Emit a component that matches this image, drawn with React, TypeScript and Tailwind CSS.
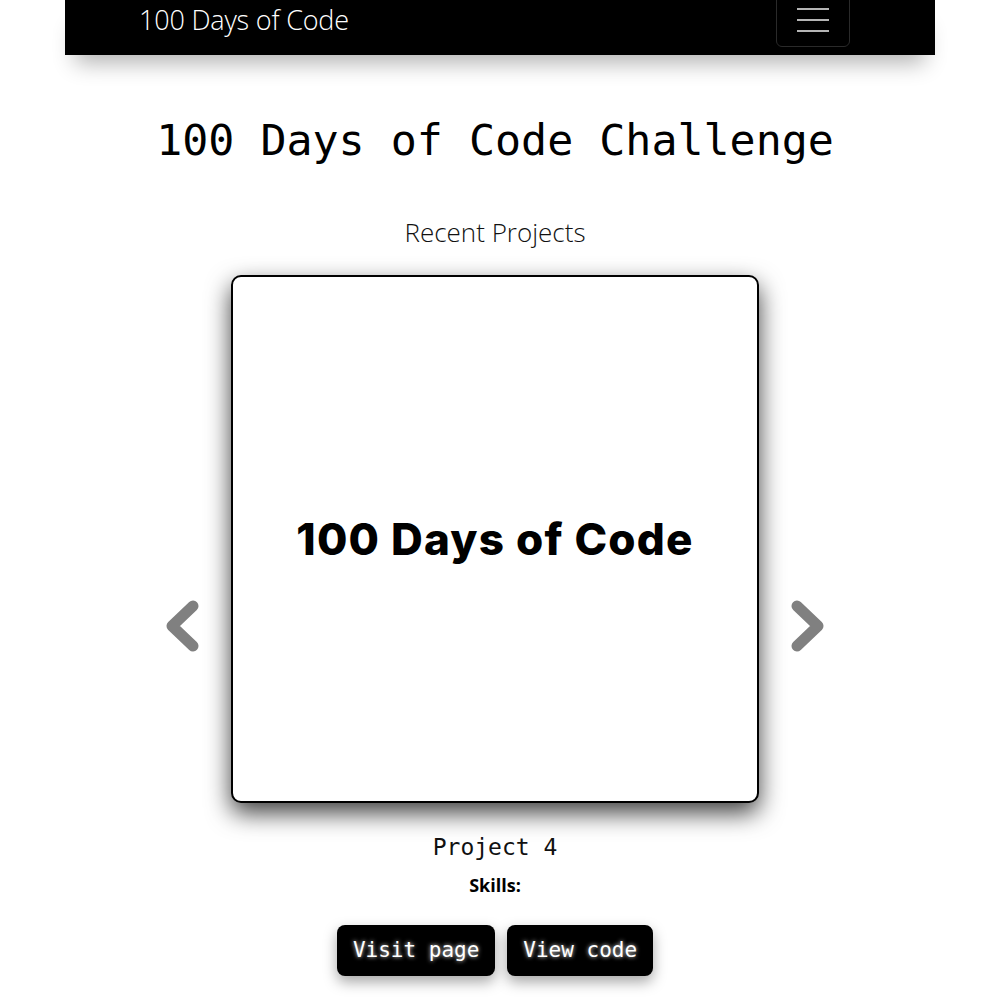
import React from "react";

const mono = { fontFamily: '"DejaVu Sans Mono", "Liberation Mono", monospace' };

const Chevron: React.FC<{ dir: "left" | "right" }> = ({ dir }) => (
  <svg width="36" height="54" viewBox="0 0 36 54" aria-hidden="true">
    <polyline
      points={dir === "left" ? "29,7 8,27 29,47" : "7,7 28,27 7,47"}
      fill="none"
      stroke="#808080"
      strokeWidth="11"
      strokeLinecap="round"
      strokeLinejoin="round"
    />
  </svg>
);

const App: React.FC = () => {
  return (
    <div className="min-h-[1000px] w-full bg-white font-['Open_Sans',sans-serif]">
      <div className="mx-auto w-[870px]">
        {/* Navbar */}
        <nav className="relative z-10 flex h-[55px] items-start justify-between bg-black shadow-[0_18px_22px_-10px_rgba(0,0,0,0.3)]">
          <a className="pl-[74px] text-[27px] font-light leading-[40px] tracking-[-0.2px] text-white">
            100 Days of Code
          </a>
          <button className="mr-[85px] -mt-[12px] flex h-[59px] w-[74px] flex-col items-center justify-end gap-[9px] rounded-md border border-[#2a2a2a] pb-[14px]">
            <span className="block h-[2px] w-[32px] bg-[#b5b5b5]" />
            <span className="block h-[2px] w-[32px] bg-[#b5b5b5]" />
            <span className="block h-[2px] w-[32px] bg-[#b5b5b5]" />
          </button>
        </nav>

        {/* Main */}
        <main className="mr-[10px] flex flex-col items-center">
          <h1
            style={mono}
            className="mt-[59px] text-[43.3px] leading-[52px] text-black"
          >
            100 Days of Code Challenge
          </h1>

          <h2 className="mt-[49px] text-[26px] font-light leading-[34px] text-[#111]">
            Recent Projects
          </h2>

          {/* Carousel */}
          <div className="mt-[26px] flex items-center gap-[31px]">
            <Chevron dir="left" />
            <div className="flex flex-col items-center">
              <div className="flex h-[528px] w-[528px] items-center justify-center rounded-[10px] border-2 border-black bg-white shadow-[0_10px_24px_rgba(0,0,0,0.75)]">
                <span className="font-['Inter',sans-serif] text-[44px] font-extrabold tracking-[1.2px] text-black">
                  100 Days of Code
                </span>
              </div>
              <p style={mono} className="mt-[28px] text-[23px] leading-[32px] text-[#111]">
                Project 4
              </p>
              <p className="mt-[10px] text-[18px] font-bold leading-[24px] text-black">
                Skills:
              </p>
              <div className="mt-[28px] flex gap-[12px]">
                {["Visit page", "View code"].map((label) => (
                  <button
                    key={label}
                    style={mono}
                    className="h-[51px] rounded-[8px] bg-black px-[16px] text-[21px] font-medium text-white shadow-[0_6px_14px_rgba(0,0,0,0.35)] [text-shadow:0_0_4px_rgba(255,255,255,0.9)]"
                  >
                    {label}
                  </button>
                ))}
              </div>
            </div>
            <Chevron dir="right" />
          </div>
        </main>
      </div>
    </div>
  );
};

export default App;
